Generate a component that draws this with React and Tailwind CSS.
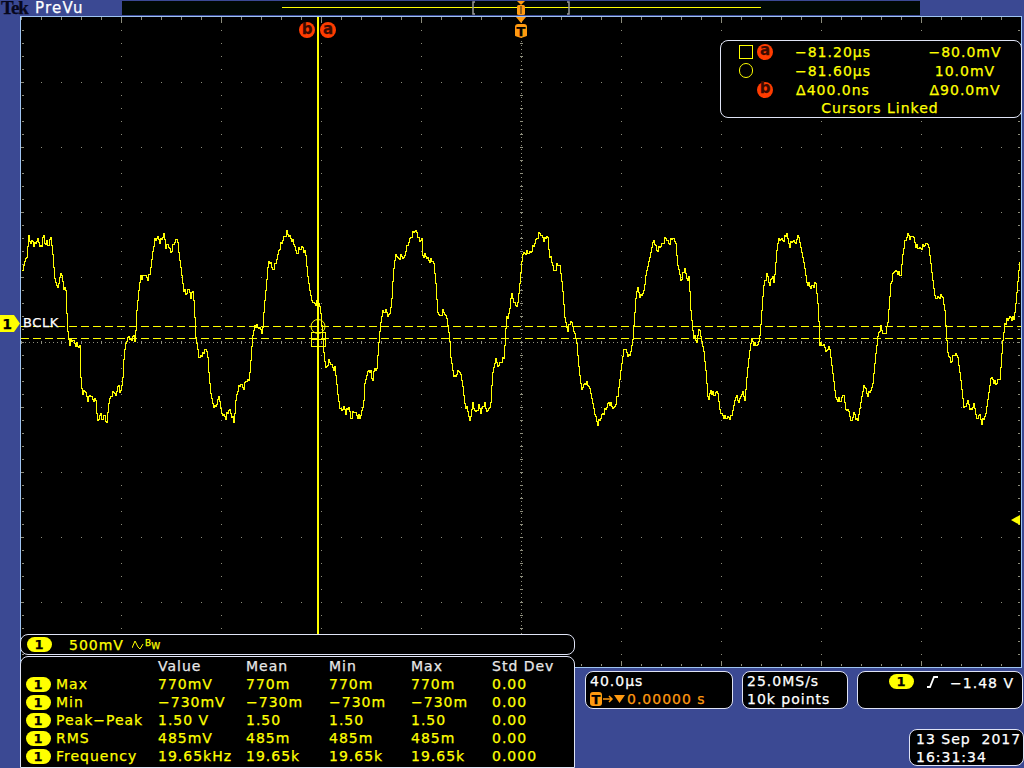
import React from 'react';

// waveform traced from the scope picture, three chunks: [x offset, "x y x y ..." at 3x]
const traces = [
  [0, '64 195 66 150 72 120 78 112 84 45 88 70 95 60 100 75 110 55 118 75 122 85 128 35 132 70 138 60 142 80 150 50 155 90 158 130 162 175 167 195 173 195 180 155 185 175 188 200 195 210 197 260 202 350 207 370 215 355 222 370 232 375 238 380 240 470 245 525 250 505 255 520 262 540 268 520 275 535 285 540 288 580 292 605 298 580 305 600 310 580 318 605 325 540 332 525 340 510 345 525 352 495 358 515 365 490 370 400 375 365 385 345 392 365 398 340 403 370 408 270 415 200 420 165 425 175 430 158 440 175 448 158 455 100 462 60 470 50 478 65 490 40 495 85 500 65 510 95 520 65 530 55 533 90 540 140 548 205 555 220 565 205 570 235 575 205 580 250 585 350 590 380 595 420 600 405 608 400 612 385 620 395 625 470 630 520 635 545 640 565 650 545 655 525 660 570 668 585 675 590 685 565 695 590 700 605 705 540 710 510 720 490 728 505 735 480 745 480 750 420 755 350 762 315 775 320 785 335 790 260 797 190 802 130 810 125 815 150 825 130 835 85 845 60 858 35 868 50 880 70 887 100 895 85 905 80 915 105 920 160 930 230 940 250 955 245 960 280 965 340 970 410 975 445 985 420 995 440 1003 445 1012 530 1018 570'],
  [340, '0 570 10 560 15 575 25 557 30 595 40 570 48 585 58 590 68 555 72 490 82 450 90 450 95 488 100 445 108 445 112 390 118 320 125 275 135 270 145 290 152 250 158 150 165 100 172 115 182 105 190 115 198 80 205 60 220 30 228 35 235 60 243 55 245 105 255 105 265 120 278 120 285 190 290 270 298 290 308 270 318 295 322 320 328 370 330 410 340 475 350 455 358 450 365 490 372 550 380 570 388 605 395 550 405 575 415 555 420 575 430 548 440 575 450 545 455 460 465 415 470 435 480 425 490 410 497 290 505 285 512 215 520 250 530 255 537 190 545 100 560 95 570 95 585 60 597 35 610 60 620 40 625 100 635 130 640 155 650 130 657 135 665 200 672 290 680 330 690 300 700 330 708 370 715 450 722 505 735 485 745 495 755 545 762 580 770 610 780 590 795 565 805 545 820 565 832 520 840 450 850 380 865 410 875 370 885 235 890 200 898 230 910 210 915 165 925 120 938 55 948 90 965 70 975 50 985 70 995 50 1005 70 1010 130 1018 165'],
  [680, '0 180 12 145 18 175 25 175 30 270 37 340 48 365 55 320 62 360 68 385 75 450 82 540 90 510 100 525 110 510 118 575 130 590 150 590 155 575 165 525 175 545 185 510 192 540 200 450 208 380 212 355 220 370 232 375 238 340 245 240 250 185 260 160 266 200 272 165 280 185 290 65 300 55 308 60 318 40 326 78 335 60 345 70 352 40 360 80 370 130 378 185 390 200 405 190 412 260 417 370 430 375 438 395 445 370 455 450 465 535 480 540 488 520 495 565 505 575 510 605 520 575 530 605 540 545 550 490 560 525 575 500 585 400 592 340 600 320 610 345 620 320 630 190 640 150 650 155 660 165 668 80 680 40 690 55 695 40 705 75 718 85 730 75 742 65 750 130 762 230 775 230 785 225 792 270 800 390 810 425 820 400 830 405 840 480 850 570 860 540 870 570 880 550 888 600 895 580 903 605 915 580 925 510 930 470 945 490 958 470 965 370 972 310 985 290 1000 295 1005 250 1015 140 1020 100'],
];

// one sample per screen pixel, y snapped to the pixel, with some sample noise on flat parts
const buildWave = () => {
  const pts = [];
  traces.forEach(([off, s]) => {
    const n = s.split(' ').map(Number);
    for (let i = 0; i < n.length; i += 2) pts.push([off + n[i] / 3, 220 + n[i + 1] / 3]);
  });
  let d = '';
  let last = null;
  for (let i = 1; i < pts.length; i++) {
    const [x0, y0] = pts[i - 1];
    const [x1, y1] = pts[i];
    const slope = Math.abs((y1 - y0) / Math.max(x1 - x0, 0.3));
    for (let x = Math.ceil(x0); x < x1; x++) {
      let y = y0 + ((y1 - y0) * (x - x0)) / Math.max(x1 - x0, 0.3);
      if (slope < 4) y += [1, -1, 0, 2, -2, 1][(x * 7) % 6];
      y = Math.round(y) + 0.5;
      d += last === null ? `M${x} ${y}` : `H${x}V${y}`;
      last = y;
    }
  }
  return d;
};
const wavePath = buildWave();

const range = (from, to, step) => {
  const out = [];
  for (let v = from; v <= to; v += step) out.push(v);
  return out;
};

const Dots = () => {
  const d = [];
  // major columns and rows
  range(121, 921, 100).forEach((x) => range(17, 667, 13).forEach((y) => d.push([x, y, 1, 1])));
  range(17, 667, 65).forEach((y) => range(21, 1021, 20).forEach((x) => d.push([x, y, 1, 1])));
  // edge ticks
  range(21, 1021, 20).forEach((x) => {
    d.push([x, 18, 1, 2]);
    d.push([x, 664, 1, 2]);
  });
  range(121, 921, 100).forEach((x) => {
    d.push([x, 18, 1, 5]);
    d.push([x, 661, 1, 5]);
  });
  range(30, 654, 13).forEach((y) => {
    d.push([22, y, 2, 1]);
    d.push([1018, y, 2, 1]);
  });
  // centre cross
  range(21, 1021, 4).forEach((x) => d.push([x, 342, 1, 1]));
  range(21, 1021, 20).forEach((x) => d.push([x, 341, 1, 3]));
  range(17, 667, 4).forEach((y) => d.push([521, y, 1, 1]));
  range(17, 667, 13).forEach((y) => d.push([520, y, 3, 1]));
  return (
    <g fill="#8d8d7c">
      {d.map(([x, y, w, h], i) => (
        <rect key={i} x={x} y={y} width={w} height={h} />
      ))}
    </g>
  );
};

const Badge = () => (
  <span className="flex h-[15px] w-[25px] shrink-0 items-center justify-center rounded-full bg-[#ffff00] text-[13px] font-bold leading-none text-black">
    1
  </span>
);

const Cursor = ({ children }) => (
  <span className="flex h-[16px] w-[16px] items-center justify-center rounded-full bg-[#ff3c00] pb-[2px] text-[15px] font-bold leading-none tracking-normal text-[#3a0a00]">
    {children}
  </span>
);

const TMark = () => (
  <span className="flex h-[14px] w-[12px] items-center justify-center rounded-[3px] bg-[#ff9a10] text-[13px] font-bold leading-none tracking-normal text-black">
    T
  </span>
);

const rows = [
  ['Max', '770mV', '770m', '770m', '770m', '0.00'],
  ['Min', '−730mV', '−730m', '−730m', '−730m', '0.00'],
  ['Peak−Peak', '1.50 V', '1.50', '1.50', '1.50', '0.00'],
  ['RMS', '485mV', '485m', '485m', '485m', '0.00'],
  ['Frequency', '19.65kHz', '19.65k', '19.65k', '19.65k', '0.000'],
];

const panel = 'rounded-[8px] border border-[#dfe3f5] bg-black';

export default function App() {
  return (
    <div className="h-[768px] w-[1024px] overflow-hidden bg-[#3b4993] font-['DejaVu_Sans',sans-serif] text-[14px] leading-[18px] tracking-[1px] [-webkit-text-stroke:0.25px]">
      {/* top strip */}
      <div className="flex h-[16px]">
        <div className="flex w-[122px] items-center pl-px">
          <span className="w-[34px] font-['Liberation_Serif',serif] text-[19px] font-bold leading-[16px] tracking-[-1px] text-[#07071c]">
            Tek
          </span>
          <span className="text-[15px] leading-[15px] tracking-[1.2px] text-white">PreVu</span>
        </div>
        <svg className="mt-px h-[14px] w-[798px] bg-[#000804]" viewBox="122 1 798 14">
          <rect x="282" y="7" width="479" height="1" fill="#ffff00" />
          <path d="M475 2h-2v12h2M567 2h2v12h-2" fill="none" stroke="#9a9a9a" strokeWidth="1.5" />
          <path d="M517 1h8l-4 4z" fill="#ff9a10" />
          <rect x="517" y="5" width="8" height="10" rx="1.5" fill="#ff9a10" />
          <rect x="520.5" y="6" width="1" height="8" fill="#222" />
        </svg>
      </div>

      {/* graticule */}
      <div className="relative ml-[20px] h-[652px] w-[1002px] border border-[#9fc4f2] bg-black">
        <svg className="absolute inset-0 h-[650px] w-[1000px]" viewBox="21 17 1000 650">
          <Dots />
          <path d="M21 326.5h1000M21 338.5h1000" stroke="#ffff00" strokeWidth="1" strokeDasharray="8 4" />
          <path d={wavePath} fill="none" stroke="#ffff00" strokeWidth="1" shapeRendering="crispEdges" />
          <rect x="317" y="17" width="2" height="618" fill="#ffff00" />
          <g fill="none" stroke="#ffff00" strokeWidth="1">
            <circle cx="318" cy="326.5" r="7" />
            <rect x="311.5" y="332.5" width="14" height="14" />
            <path d="M311.5 339.5h14" />
          </g>
          <path d="M516 17h10l-5 6z" fill="#ff9a10" />
          <path d="M1020 515v10l-9-5z" fill="#ffff00" />
        </svg>

        {/* cursor and trigger marks */}
        <div className="absolute left-[278px] top-[5px] flex gap-[5px]">
          <Cursor>b</Cursor>
          <Cursor>a</Cursor>
        </div>
        <div className="absolute left-[494px] top-[7px] [clip-path:polygon(0_0,100%_0,100%_85%,50%_100%,0_85%)]">
          <TMark />
        </div>

        {/* channel marker */}
        <div className="absolute left-[-21px] top-[298px] flex h-[17px] w-[20px] items-center justify-center bg-[#ffff00] pr-[5px] text-[14px] font-bold leading-none text-black [clip-path:polygon(0_0,70%_0,100%_50%,70%_100%,0_100%)]">
          1
        </div>
        <span className="absolute left-[2px] top-[297px] text-[13px] tracking-[0.6px] text-white">BCLK</span>

        {/* cursor readout */}
        <div className={`absolute left-[699px] top-[23px] w-[302px] pl-[18px] pt-px text-[#ffff00] ${panel}`}>
          <div className="grid grid-cols-[18px_26px_100px_132px] grid-rows-[19px_19px_19px] items-center">
            <span className="h-[14px] w-[14px] border border-[#ffff00]" />
            <Cursor>a</Cursor>
            <span className="text-center">−81.20µs</span>
            <span className="pl-[32px] text-center">−80.0mV</span>
            <span className="h-[15px] w-[14px] rounded-full border border-[#ffff00]" />
            <span />
            <span className="text-center">−81.60µs</span>
            <span className="pl-[32px] text-center">10.0mV</span>
            <span />
            <Cursor>b</Cursor>
            <span className="text-center">Δ400.0ns</span>
            <span className="pl-[32px] text-center">Δ90.0mV</span>
          </div>
          <div className="text-center">Cursors Linked</div>
        </div>
      </div>

      {/* readouts along the bottom */}
      <div className="relative -mt-[34px] flex">
        <div className="ml-[20px] w-[555px]">
          <div className={`flex h-[21px] items-center pl-[6px] text-[#ffff00] ${panel}`}>
            <Badge />
            <span className="ml-[17px]">500mV</span>
            <svg className="ml-[8px]" width="12" height="10" viewBox="0 0 12 10">
              <path d="M0 8L3 1l3 6 2 2 3-5" fill="none" stroke="#ffff00" />
            </svg>
            <span className="ml-px flex items-start text-[9px] leading-[9px] tracking-normal">
              B<span className="mt-[3px]">W</span>
            </span>
          </div>
          <div className={`mt-px grid h-[112px] grid-cols-[137px_88px_83px_82px_81px_1fr] grid-rows-[18px_repeat(5,18px)] rounded-b-none text-[#ffff00] ${panel}`}>
            <span />
            {['Value', 'Mean', 'Min', 'Max', 'Std Dev'].map((h) => (
              <span key={h} className="text-[#e8e8e8]">{h}</span>
            ))}
            {rows.map((r) => (
              <React.Fragment key={r[0]}>
                <span className="flex items-center gap-[5px] pl-[5px]">
                  <Badge />
                  {r[0]}
                </span>
                {r.slice(1).map((v, i) => (
                  <span key={i}>{v}</span>
                ))}
              </React.Fragment>
            ))}
          </div>
        </div>

        <div className="ml-[10px] w-[439px] pt-[37px]">
          <div className="flex gap-[9px] text-white">
            <div className={`h-[38px] w-[148px] pl-[4px] ${panel}`}>
              <div>40.0µs</div>
              <div className="flex items-center text-[#ff9a10]">
                <TMark />
                <svg className="ml-px" width="23" height="10" viewBox="0 0 23 10">
                  <path d="M0 5h9M6 2l3 3-3 3" fill="none" stroke="#ff9a10" strokeWidth="1.5" />
                  <path d="M11 1h11l-5.5 8z" fill="#ff9a10" />
                </svg>
                <span className="ml-px">0.00000 s</span>
              </div>
            </div>
            <div className={`h-[38px] w-[106px] pl-[4px] ${panel}`}>
              <div>25.0MS/s</div>
              <div>10k points</div>
            </div>
            <div className={`flex h-[38px] w-[166px] items-start justify-end pr-[8px] pt-[2px] ${panel}`}>
              <Badge />
              <svg className="ml-[12px] mt-[2px]" width="13" height="12" viewBox="0 0 13 12">
                <path d="M1 11h3l4-10h4" fill="none" stroke="#fff" strokeWidth="1.8" />
              </svg>
              <span className="ml-[11px]">−1.48 V</span>
            </div>
          </div>
          <div className="mt-[20px] flex justify-end text-white">
            <div className={`h-[37px] w-[115px] pl-[6px] ${panel}`}>
              <div className="whitespace-pre">13 Sep  2017</div>
              <div>16:31:34</div>
            </div>
          </div>
        </div>
      </div>
    </div>
  );
}
